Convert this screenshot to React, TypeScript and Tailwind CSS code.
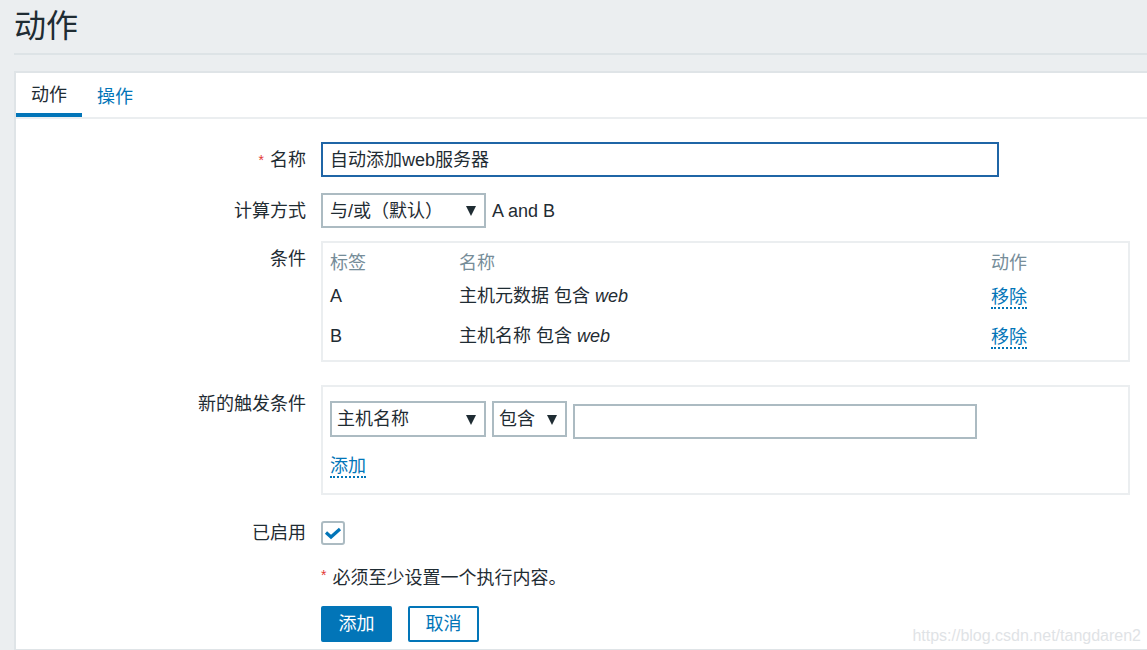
const FONT = '"Liberation Sans", Arial, "Noto Sans CJK SC", sans-serif';

const Caret = () => (
  <svg width="10" height="11" viewBox="0 0 10 11" className="shrink-0">
    <polygon points="0,1 10,1 5,11" fill="#1f2c33" />
  </svg>
);

const Label = ({ children, required, className = '' }: { children: React.ReactNode; required?: boolean; className?: string }) => (
  <div className={`w-[305px] shrink-0 pr-[15px] text-right text-[#1f2c33] ${className}`}>
    {required && <span className="text-[#e33734] text-[14px] mr-[6px] align-top">*</span>}
    {children}
  </div>
);

const DottedLink = ({ children }: { children: React.ReactNode }) => (
  <span className="text-[#0275b8] border-b-2 border-dotted border-[#0275b8] leading-[20px] inline-block">{children}</span>
);

const App = () => {
  const conditions = [
    { tag: 'A', text: '主机元数据 包含 ' },
    { tag: 'B', text: '主机名称 包含 ' },
  ];

  return (
    <div className="min-h-[650px] w-[1147px] overflow-hidden bg-[#ebeef0] text-[18px] leading-[24px]" style={{ fontFamily: FONT }}>
      {/* Header */}
      <div className="pl-[14px]">
        <div className="h-[53px] flex items-center text-[32px] text-[#1f2c33] pb-[2px]">动作</div>
        <div className="h-[2px] bg-[#dde3e6]" />
      </div>

      {/* Card */}
      <div className="ml-[14px] mt-[16px] bg-white border-2 border-r-0 border-[#dfe4e7] min-h-[580px] relative">
        {/* Tabs */}
        <div className="flex border-b-2 border-[#ebeef0]">
          <div className="h-[44px] px-[15px] pt-[3px] flex items-center border-b-4 border-[#0275b8] text-[#1f2c33]">动作</div>
          <div className="h-[44px] px-[15px] pt-[3px] flex items-center text-[#0275b8]">操作</div>
        </div>

        <div className="pt-[23px] flex flex-col">
          {/* Name */}
          <div className="flex items-center">
            <Label required>名称</Label>
            <div className="w-[678px] h-[35px] border-2 border-[#1f65a6] px-[7px] flex items-center text-[#1f2c33]">自动添加web服务器</div>
          </div>

          {/* Calculation */}
          <div className="flex items-center mt-[16px]">
            <Label>计算方式</Label>
            <div className="w-[165px] h-[35px] border-2 border-[#acbbc2] pl-[7px] pr-[8px] flex items-center justify-between text-[#1f2c33]">
              <span>与/或（默认）</span>
              <Caret />
            </div>
            <span className="ml-[6px] text-[#1f2c33]">A and B</span>
          </div>

          {/* Conditions */}
          <div className="flex items-start mt-[13px]">
            <Label className="pt-[6px]">条件</Label>
            <div className="w-[809px] h-[121px] border-2 border-[#ebeef0] px-[7px] pt-[9px]">
              <div className="flex text-[#768d99] h-[22px] items-center">
                <div className="w-[129px]">标签</div>
                <div className="w-[532px]">名称</div>
                <div>动作</div>
              </div>
              {conditions.map((c, i) => (
                <div key={c.tag} className={`flex items-center text-[#1f2c33] h-[24px] ${i === 0 ? 'mt-[10px]' : 'mt-[16px]'}`}>
                  <div className="w-[129px]">{c.tag}</div>
                  <div className="w-[532px]">
                    {c.text}
                    <i>web</i>
                  </div>
                  <div className="pt-[2px]">
                    <DottedLink>移除</DottedLink>
                  </div>
                </div>
              ))}
            </div>
          </div>

          {/* New condition */}
          <div className="flex items-start mt-[23px]">
            <Label className="pt-[7px]">新的触发条件</Label>
            <div className="w-[809px] h-[110px] border-2 border-[#ebeef0] px-[7px] pt-[14px]">
              <div className="flex items-start gap-[6px]">
                <div className="w-[156px] h-[36px] border-2 border-[#acbbc2] pl-[5px] pr-[8px] flex items-center justify-between text-[#1f2c33]">
                  <span>主机名称</span>
                  <Caret />
                </div>
                <div className="w-[75px] h-[36px] border-2 border-[#acbbc2] pl-[5px] pr-[8px] flex items-center justify-between text-[#1f2c33]">
                  <span>包含</span>
                  <Caret />
                </div>
                <div className="w-[404px] h-[35px] mt-[3px] border-2 border-[#acbbc2]" />
              </div>
              <div className="mt-[15px]">
                <DottedLink>添加</DottedLink>
              </div>
            </div>
          </div>

          {/* Enabled */}
          <div className="flex items-center mt-[26px]">
            <Label>已启用</Label>
            <div className="w-[24px] h-[24px] border-2 border-[#acbbc2] rounded-[3px] flex items-center justify-center">
              <svg width="18" height="14" viewBox="0 0 18 14">
                <path d="M2 6.5 L7 11 L16 3" fill="none" stroke="#0275b8" strokeWidth="3.2" />
              </svg>
            </div>
          </div>

          {/* Required hint */}
          <div className="flex items-center mt-[21px] h-[24px]">
            <div className="w-[305px] shrink-0" />
            <span className="text-[#e33734] text-[14px] mr-[6px] self-start leading-[18px]">*</span>
            <span className="text-[#1f2c33]">必须至少设置一个执行内容。</span>
          </div>

          {/* Buttons */}
          <div className="flex items-center mt-[16px] gap-[16px] pl-[305px]">
            <button className="w-[71px] h-[36px] bg-[#0275b8] text-white rounded-[2px] border-2 border-[#0275b8]">添加</button>
            <button className="w-[71px] h-[36px] bg-white text-[#0275b8] rounded-[2px] border-2 border-[#0275b8]">取消</button>
          </div>
        </div>

        <div className="absolute right-[6px] top-[551px] text-[16px] text-[#dfe3e6]" style={{ fontFamily: '"Liberation Sans", Arial, sans-serif' }}>
          https://blog.csdn.net/tangdaren2
        </div>
      </div>
    </div>
  );
};

export default App;
